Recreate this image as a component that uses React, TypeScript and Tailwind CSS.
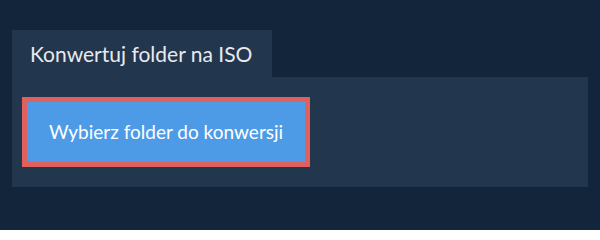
export default function App() {
  return (
    <div
      className="w-[600px] h-[230px] bg-[#12253b] pt-[30px] px-[12px]"
      style={{ fontFamily: "Lato, 'Noto Sans', sans-serif" }}
    >
      <div className="flex">
        <div className="h-[47px] w-[260px] bg-[#22364d] pl-[18px] flex items-center text-[21px] text-[#e8eaed]">
          Konwertuj folder na ISO
        </div>
      </div>
      <div className="bg-[#22364d] h-[110px] px-[10px] py-[20px]">
        <button className="w-[288px] h-[70px] border-[5px] border-[#e0605e] bg-[#4d9be6] text-white text-[19px] flex items-center justify-center">
          Wybierz folder do konwersji
        </button>
      </div>
    </div>
  );
}
